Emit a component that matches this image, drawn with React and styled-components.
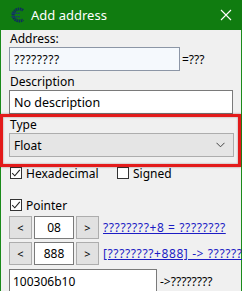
import React from 'react';
import styled, { createGlobalStyle } from 'styled-components';

const Global = createGlobalStyle`
  html, body { margin: 0; padding: 0; background: #f0f0f0; }
  body {
    font-family: "Noto Sans", "DejaVu Sans", sans-serif;
    font-size: 12px;
    color: #000;
  }
  * { box-sizing: border-box; }
`;

const Window = styled.div`
  width: 242px;
  height: 291px;
  overflow: hidden;
  background: #f0f0f0;
  display: flex;
  flex-direction: column;
`;

const TitleBar = styled.div`
  height: 30px;
  flex-shrink: 0;
  background: #107c10;
  color: #fff;
  display: flex;
  align-items: center;
  padding: 0 10px 0 10px;
  gap: 6px;
`;

const Title = styled.div`
  flex: 1;
  font-size: 13px;
  line-height: 16px;
`;

const Body = styled.div`
  flex: 1;
  border-left: 1px solid #1a8a1a;
  border-right: 1px solid #1a8a1a;
  padding: 1px 8px 0 8px;
  display: flex;
  flex-direction: column;
`;

const Label = styled.div`
  line-height: 16px;
  height: 16px;
  padding-left: 1px;
  margin-top: ${p => p.$mt || 0}px;
`;

const Row = styled.div`
  display: flex;
  align-items: center;
  gap: ${p => p.$gap || 0}px;
  margin-top: ${p => p.$mt || 0}px;
  height: ${p => p.$h || 16}px;
  white-space: nowrap;
`;

const TextBox = styled.div`
  width: ${p => p.$w}px;
  height: 24px;
  flex-shrink: 0;
  border: 1px solid ${p => p.$border || '#7a7a7a'};
  background: ${p => p.$bg || '#fff'};
  display: flex;
  align-items: center;
  padding-left: ${p => p.$pl || 4}px;
  font-size: ${p => p.$fs || 12}px;
  letter-spacing: ${p => p.$ls || 0}px;
`;

const Suffix = styled.span`
  margin-left: 2px;
  font-size: 12px;
`;

const TypeSection = styled.div`
  position: relative;
  padding: 3px 0 8px 0;
  display: flex;
  flex-direction: column;
`;

const Highlight = styled.div`
  position: absolute;
  left: -9px;
  top: 0;
  width: 241px;
  height: 53px;
  border: 3px solid #e31b1b;
  box-shadow: 0 0 2px rgba(80, 0, 0, 0.45), inset 0 0 2px rgba(80, 0, 0, 0.45);
  pointer-events: none;
`;

const Select = styled.div`
  height: 24px;
  margin-right: -1px;
  border: 1px solid #adadad;
  background: #e5e5e5;
  display: flex;
  align-items: center;
  justify-content: space-between;
  padding: 0 8px 0 4px;
`;

const CheckWrap = styled.label`
  display: flex;
  align-items: center;
  gap: 4px;
  padding-left: 1px;
  width: ${p => (p.$w ? `${p.$w}px` : 'auto')};
`;

const Box = styled.span`
  width: 12px;
  height: 12px;
  border: 1px solid #333;
  background: #fff;
  display: inline-flex;
  align-items: center;
  justify-content: center;
  flex-shrink: 0;
`;

const Btn = styled.div`
  width: 23px;
  height: 23px;
  flex-shrink: 0;
  background: #e1e1e1;
  border: 1px solid #adadad;
  display: flex;
  align-items: center;
  justify-content: center;
  font-size: 11px;
`;

const OffsetBox = styled.div`
  width: 40px;
  height: 23px;
  flex-shrink: 0;
  background: #fff;
  border: 1px solid #7a7a7a;
  display: flex;
  align-items: center;
  justify-content: center;
  font-size: 12px;
`;

const Link = styled.span`
  margin-left: 2px;
  color: #1c1cc4;
  text-decoration: underline;
  font-size: 12px;
  letter-spacing: 0.6px;
`;

const Arrow = styled.span`
  margin-left: 3px;
  font-size: 12px;
`;

const Check = ({ on }) => (
  <Box>
    {on && (
      <svg width="10" height="10" viewBox="0 0 10 10">
        <path d="M1.2 5.2 L3.8 7.8 L8.8 1.8" fill="none" stroke="#222" strokeWidth="1.1" />
      </svg>
    )}
  </Box>
);

const Logo = () => (
  <svg width="15" height="16" viewBox="0 0 15 16">
    <path d="M13 3.4 A6 6 0 1 0 13 12.6" fill="none" stroke="#0f2d5e" strokeWidth="3" strokeDasharray="1.4 0.6" />
    <path d="M1.5 6.3 H10.5 M1.5 9.7 H10.5" stroke="#183f6e" strokeWidth="1.5" strokeDasharray="1.3 0.5" />
  </svg>
);

const Close = () => (
  <svg width="12" height="12" viewBox="0 0 12 12">
    <path d="M1 1 L11 11 M11 1 L1 11" stroke="#fff" strokeWidth="1.1" />
  </svg>
);

const Chevron = () => (
  <svg width="9" height="6" viewBox="0 0 9 6">
    <path d="M0.5 0.8 L4.5 4.8 L8.5 0.8" fill="none" stroke="#444" strokeWidth="1" />
  </svg>
);

export default function App() {
  return (
    <>
      <Global />
      <Window>
        <TitleBar>
          <Logo />
          <Title>Add address</Title>
          <Close />
        </TitleBar>
        <Body>
          <Label>Address:</Label>
          <Row $h={24}>
            <TextBox $w={171} $bg="#f5f9fd" $border="#8c96a6" $ls={0.5}>????????</TextBox>
            <Suffix>=???</Suffix>
          </Row>
          <Label $mt={3}>Description</Label>
          <TextBox $w={224} $fs={12.5}>No description</TextBox>
          <TypeSection>
            <Highlight />
            <Label>Type</Label>
            <Select>
              <span>Float</span>
              <Chevron />
            </Select>
          </TypeSection>
          <Row>
            <CheckWrap $w={107}>
              <Check on />
              <span>Hexadecimal</span>
            </CheckWrap>
            <CheckWrap>
              <Check />
              <span>Signed</span>
            </CheckWrap>
          </Row>
          <Row $mt={16}>
            <CheckWrap>
              <Check on />
              <span>Pointer</span>
            </CheckWrap>
          </Row>
          <Row $mt={3} $h={23} $gap={2}>
            <Btn>&lt;</Btn>
            <OffsetBox>08</OffsetBox>
            <Btn>&gt;</Btn>
            <Link>????????+8 = ????????</Link>
          </Row>
          <Row $mt={3} $h={23} $gap={2}>
            <Btn>&lt;</Btn>
            <OffsetBox>888</OffsetBox>
            <Btn>&gt;</Btn>
            <Link>[????????+888] -&gt; ????????</Link>
          </Row>
          <Row $mt={4} $h={24}>
            <TextBox $w={148} $pl={3}>100306b10</TextBox>
            <Arrow>-&gt;????????</Arrow>
          </Row>
        </Body>
      </Window>
    </>
  );
}
